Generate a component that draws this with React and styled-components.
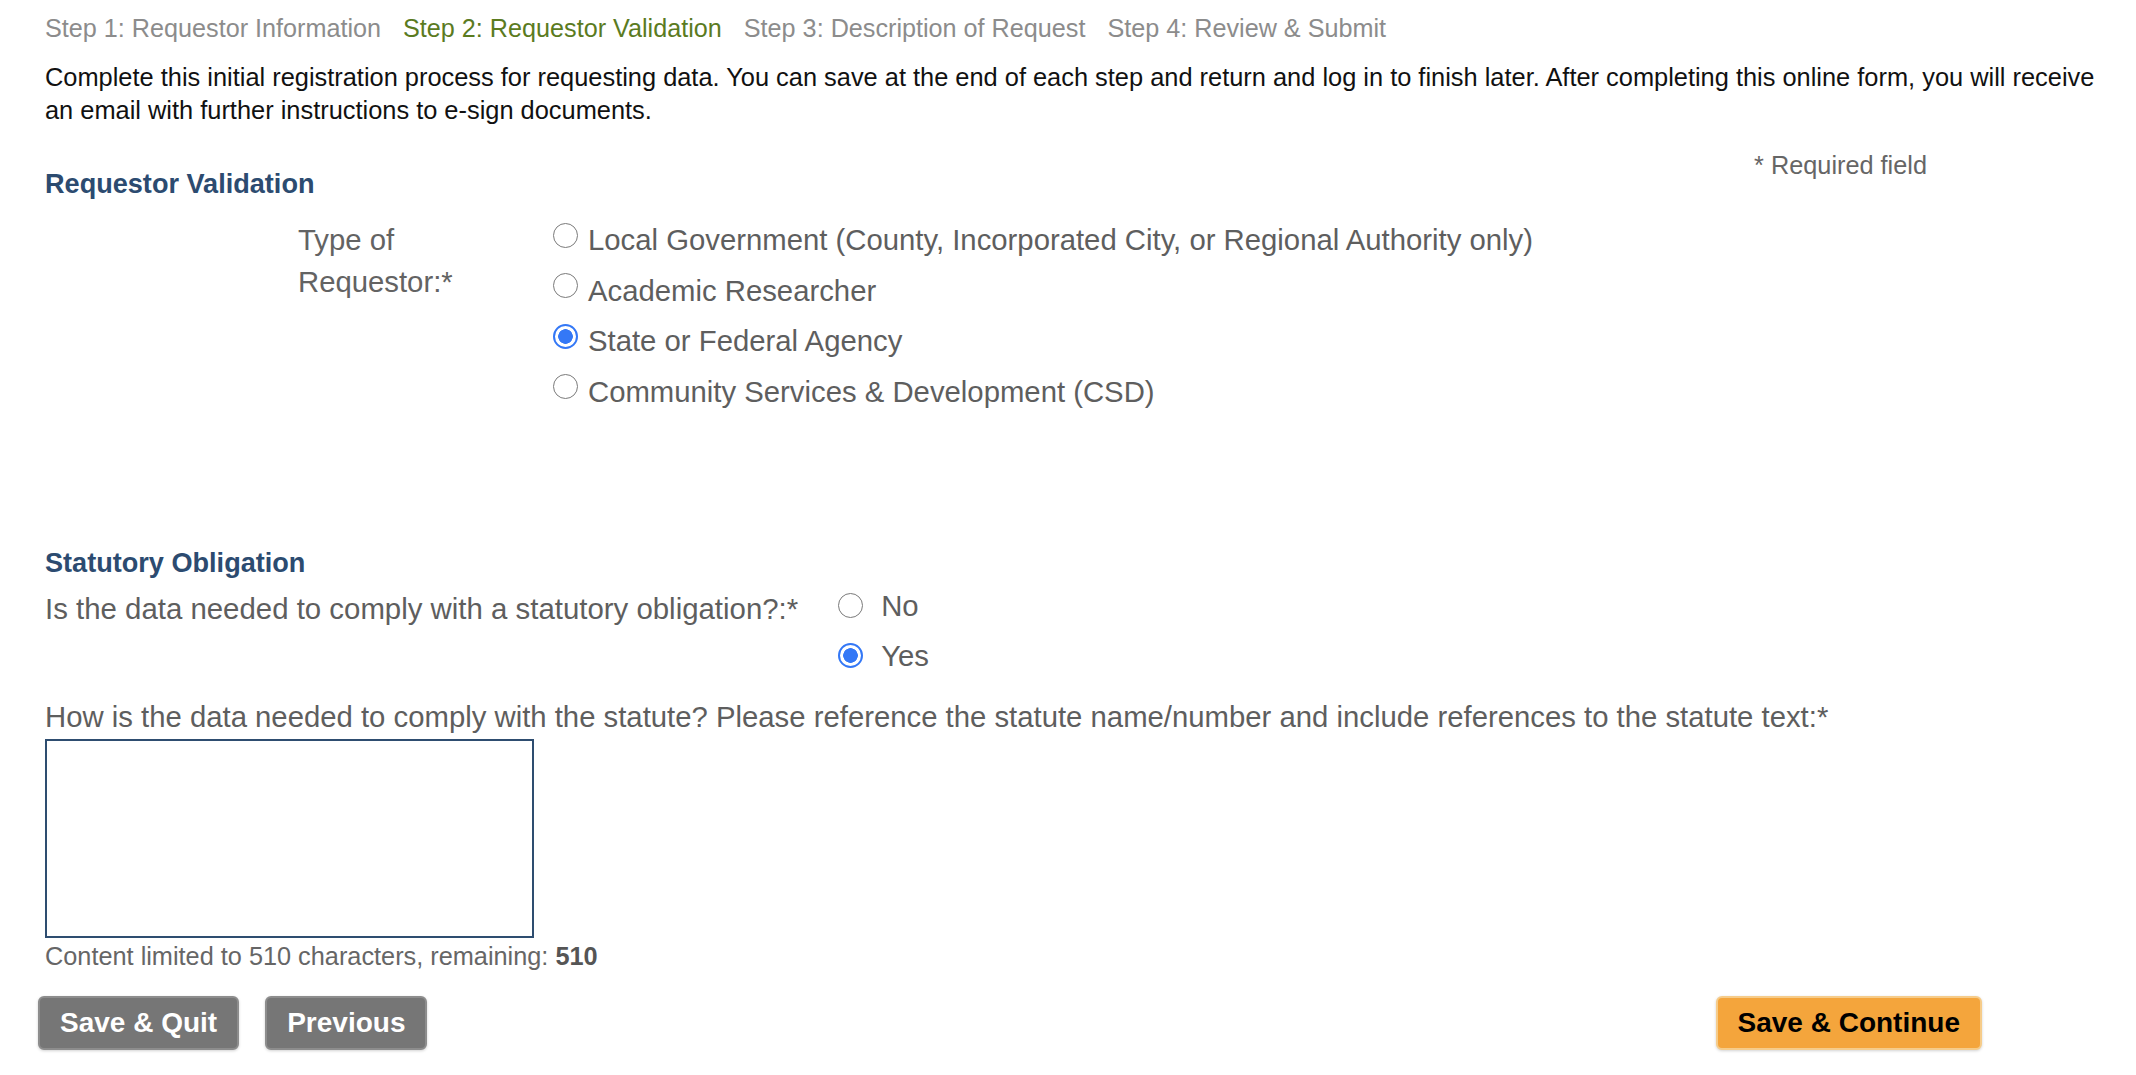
import React from 'react';
import styled, { createGlobalStyle } from 'styled-components';

const STEPS = [
  { label: 'Step 1: Requestor Information' },
  { label: 'Step 2: Requestor Validation', active: true },
  { label: 'Step 3: Description of Request' },
  { label: 'Step 4: Review & Submit' },
];

const REQUESTOR_TYPES = [
  { label: 'Local Government (County, Incorporated City, or Regional Authority only)' },
  { label: 'Academic Researcher' },
  { label: 'State or Federal Agency', checked: true },
  { label: 'Community Services & Development (CSD)' },
];

const GlobalStyle = createGlobalStyle`
  body {
    margin: 0;
    background: #fff;
    font-family: "Liberation Sans", Arial, Helvetica, sans-serif;
  }
`;

class App extends React.Component {
  render() {
    return (
      <Page>
        <GlobalStyle />

        {/* wizard steps */}
        <Steps>
          {STEPS.map(step => (
            <Step key={step.label} active={step.active}>{step.label}</Step>
          ))}
        </Steps>

        <Intro>
          Complete this initial registration process for requesting data. You can save at the end of each step
          and return and log in to finish later. After completing this online form, you will receive an email with
          further instructions to e-sign documents.
        </Intro>

        <FormWrap>
          {/* Requestor Validation */}
          <SectionHead>
            <SectionTitle>Requestor Validation</SectionTitle>
            <Required>* Required field</Required>
          </SectionHead>

          <TypeRow>
            <TypeLabel>Type of Requestor:*</TypeLabel>
            <OptionList gap="8.4px">
              {REQUESTOR_TYPES.map(opt => (
                <Option key={opt.label}>
                  <Radio name="requestorType" defaultChecked={opt.checked} lift />
                  {opt.label}
                </Option>
              ))}
            </OptionList>
          </TypeRow>

          {/* Statutory Obligation */}
          <SectionTitle spaced>Statutory Obligation</SectionTitle>
          <QuestionRow>
            <Question>Is the data needed to comply with a statutory obligation?:*</Question>
            <OptionList gap="8px">
              <Option>
                <Radio name="statutory" wide />
                No
              </Option>
              <Option>
                <Radio name="statutory" defaultChecked wide />
                Yes
              </Option>
            </OptionList>
          </QuestionRow>

          <FieldLabel htmlFor="statute">
            How is the data needed to comply with the statute? Please reference the statute name/number and include
            references to the statute text:*
          </FieldLabel>
          <TextBox id="statute" maxLength={510} />
          <Counter>Content limited to 510 characters, remaining: <b>510</b></Counter>

          <ButtonRow>
            <ButtonGroup>
              <Button>Save &amp; Quit</Button>
              <Button>Previous</Button>
            </ButtonGroup>
            <Button primary>Save &amp; Continue</Button>
          </ButtonRow>
        </FormWrap>
      </Page>
    );
  }
}

export default App;

const Page = styled.div`
  padding: 13px 30px 20px 45px;
`;

const Steps = styled.div`
  display: flex;
  gap: 22px;
  font-size: 25.2px;
  line-height: 31px;
`;

const Step = styled.span`
  color: ${p => (p.active ? '#5b7b1f' : '#8c8c8c')};
`;

const Intro = styled.p`
  margin: 17px 0 0;
  max-width: 2075px;
  font-size: 25.4px;
  line-height: 32.7px;
  color: #111;
`;

const FormWrap = styled.div`
  width: 1937px;
  margin-top: 24px;
`;

const SectionHead = styled.div`
  display: flex;
  justify-content: space-between;
  align-items: flex-start;
  height: 50px;
`;

const SectionTitle = styled.h2`
  margin: ${p => (p.spaced ? '134px 0 0' : '18px 0 0')};
  font-size: 27.1px;
  line-height: 32px;
  font-weight: bold;
  color: #2c4b70;
`;

const Required = styled.span`
  margin-right: 55px;
  font-size: 25.3px;
  line-height: 30px;
  color: #666;
`;

const TypeRow = styled.div`
  display: flex;
  align-items: flex-start;
  margin-top: 19px;
  padding-left: 253px;
`;

const TypeLabel = styled.label`
  width: 220px;
  margin-right: 35px;
  font-size: 29.3px;
  line-height: 42px;
  color: #636363;
`;

const OptionList = styled.div`
  display: flex;
  flex-direction: column;
  gap: ${p => p.gap};
`;

const Option = styled.label`
  display: flex;
  align-items: center;
  font-size: 29.3px;
  line-height: 42px;
  color: #5e5e5e;
`;

const Radio = styled.input.attrs({ type: 'radio' })`
  appearance: none;
  box-sizing: border-box;
  flex: none;
  width: 25px;
  height: 25px;
  margin: 0 ${p => (p.wide ? '18px' : '10px')} 0 0;
  position: relative;
  top: ${p => (p.lift ? '-5px' : '0')};
  border: 1.5px solid #7a7a7a;
  border-radius: 50%;
  background: #fff;

  &:checked {
    border: 2.5px solid #3478f6;
    background: radial-gradient(circle, #3478f6 0 7px, #fff 7.6px);
  }
`;

const QuestionRow = styled.div`
  display: flex;
  align-items: flex-start;
  margin-top: 6px;
`;

const Question = styled.span`
  margin: 3px 40px 0 0;
  font-size: 29.4px;
  line-height: 42px;
  color: #5e5e5e;
`;

const FieldLabel = styled.label`
  display: block;
  margin-top: 19px;
  font-size: 29.3px;
  line-height: 42px;
  color: #5e5e5e;
`;

const TextBox = styled.textarea`
  display: block;
  box-sizing: border-box;
  width: 489px;
  height: 199px;
  margin-top: 1px;
  border: 2px solid #2e4d70;
  border-radius: 0;
  resize: none;
  outline: none;
  font: inherit;
`;

const Counter = styled.div`
  margin-top: 3px;
  font-size: 25.3px;
  line-height: 30px;
  color: #666;

  b {
    color: #555;
  }
`;

const ButtonRow = styled.div`
  display: flex;
  justify-content: space-between;
  margin: 25px 0 0 -7px;
`;

const ButtonGroup = styled.div`
  display: flex;
  gap: 26px;
`;

const Button = styled.button`
  box-sizing: border-box;
  height: 54px;
  padding: 0 20px;
  border: 2px solid ${p => (p.primary ? '#f6cc8a' : '#8d8d8d')};
  border-radius: 6px;
  background: ${p => (p.primary ? '#f4a53c' : '#767676')};
  box-shadow: 0 1px 3px rgba(0, 0, 0, 0.18);
  color: ${p => (p.primary ? '#000' : '#fff')};
  font-family: "Liberation Sans", Arial, sans-serif;
  font-size: 28px;
  font-weight: bold;
  cursor: pointer;
`;
